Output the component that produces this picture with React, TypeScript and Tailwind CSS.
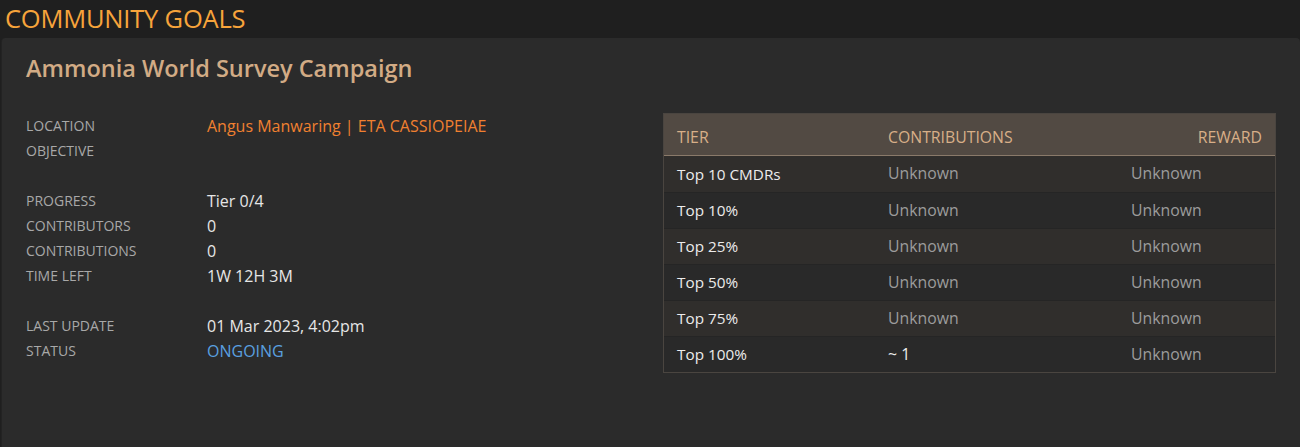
import React from "react";

const font = { fontFamily: '"Open Sans", "Noto Sans", sans-serif' };

const tiers = [
  ["Top 10 CMDRs", "Unknown"],
  ["Top 10%", "Unknown"],
  ["Top 25%", "Unknown"],
  ["Top 50%", "Unknown"],
  ["Top 75%", "Unknown"],
  ["Top 100%", "~ 1"],
];

function Row({ label, children }: { label: string; children?: React.ReactNode }) {
  return (
    <div className="flex h-[25px] items-center">
      <div className="w-[181px] text-[14px] text-[#a8a8a8]">{label}</div>
      <div className="text-[16px] text-[#e6e6e6]">{children}</div>
    </div>
  );
}

export default function App() {
  return (
    <div className="w-[1300px] h-[447px] bg-[#1f1f1f] flex flex-col overflow-hidden" style={font}>
      <div className="h-[38px] flex items-center pl-[5px] text-[25.5px] leading-none text-[#f7a43b] tracking-[-0.2px]">
        COMMUNITY GOALS
      </div>
      <div className="flex-1 ml-[1px] bg-[#2b2b2b] rounded-tl-[4px] rounded-tr-[4px] border-l border-[#232323]">
        <div className="pl-[24px] pt-[15px] text-[23.5px] font-semibold text-[#d2ab85] leading-[30px]">
          Ammonia World Survey Campaign
        </div>
        <div className="flex pl-[24px] pt-[30px]">
          <div className="w-[637px] flex flex-col">
            <Row label="LOCATION">
              <span className="text-[#f08030]">Angus Manwaring | ETA CASSIOPEIAE</span>
            </Row>
            <Row label="OBJECTIVE" />
            <div className="h-[25px]" />
            <Row label="PROGRESS">Tier 0/4</Row>
            <Row label="CONTRIBUTORS">0</Row>
            <Row label="CONTRIBUTIONS">0</Row>
            <Row label="TIME LEFT">1W 12H 3M</Row>
            <div className="h-[25px]" />
            <Row label="LAST UPDATE">01 Mar 2023, 4:02pm</Row>
            <Row label="STATUS">
              <span className="text-[#5aa0e0]">ONGOING</span>
            </Row>
          </div>
          <div className="w-[613px] border border-[#4a4540]">
            <div className="flex h-[42px] items-center pt-[6px] bg-[#524a43] border-b border-[#8a7a6a] text-[15.8px] text-[#d8af88]">
              <div className="w-[211px] pl-[13px]">TIER</div>
              <div className="w-[243px] pl-[13px]">CONTRIBUTIONS</div>
              <div className="flex-1 pr-[13px] text-right">REWARD</div>
            </div>
            {tiers.map(([t, c], i) => (
              <div
                key={t}
                className={`flex h-[36px] items-center text-[15.8px] ${i % 2 === 0 ? "bg-[#302e2c]" : "bg-[#292929]"} ${i > 0 ? "border-t border-[#252525]" : ""}`}
              >
                <div className="w-[211px] pl-[13px] text-[15.3px] font-medium text-[#ececec]">{t}</div>
                <div className={`w-[243px] pl-[13px] ${c === "Unknown" ? "text-[#9c9c9c]" : "text-[#ececec]"}`}>{c}</div>
                <div className="flex-1 pl-[13px] text-[#9c9c9c]">Unknown</div>
              </div>
            ))}
          </div>
        </div>
      </div>
    </div>
  );
}
